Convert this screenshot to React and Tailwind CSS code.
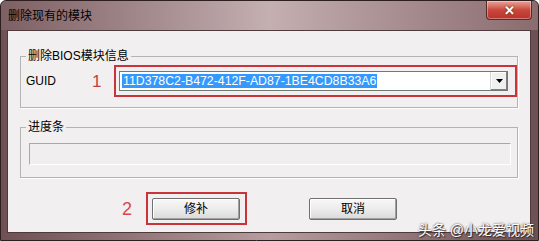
import React from 'react';

const font = { fontFamily: '"Liberation Sans", "Noto Sans CJK SC", sans-serif' };

const WinButton = ({ children }) => (
    <button
        type="button"
        className="w-[88px] h-[22px] text-[12px] text-black rounded-[2px] border border-[#707070] bg-gradient-to-b from-[#f8f8f8] via-[#ececec] to-[#dadada] shadow-[inset_-1px_-1px_0_#a0a0a0,inset_1px_1px_0_#ffffff] flex items-center justify-center"
    >
        {children}
    </button>
);

const App = () => {
    return (
        <div
            style={font}
            className="relative w-[539px] h-[241px] overflow-hidden flex flex-col rounded-t-[6px] border border-[#2e1e20] bg-gradient-to-r from-[#6f5154] via-[#b79d9f] to-[#6e5053]"
        >
            {/* title bar */}
            <div className="h-[29px] flex items-start bg-gradient-to-r from-[#7d6064] via-[#c4afb1] to-[#8a6c6f]">
                <span className="pl-[7px] pt-[7px] text-[12px] leading-[16px] text-black">删除现有的模块</span>
                <div className="ml-auto mr-[6px] w-[46px] h-[19px] rounded-b-[4px] border border-[#5a2a2a] border-t-0 bg-gradient-to-b from-[#e8a49a] via-[#c8473c] to-[#b9332a] flex items-center justify-center shadow-[inset_0_0_0_1px_rgba(255,255,255,0.35)]">
                    <span className="text-white text-[13px] font-bold leading-none [text-shadow:0_0_2px_#5a1a1a]">✕</span>
                </div>
            </div>

            {/* client area */}
            <div className="flex-1 ml-[6px] mr-[7px] mb-[7px] bg-[#f1efef] border border-[#4d3a3c] flex flex-col px-[12px] text-[12px] text-black">
                <fieldset className="mt-[17px] border border-[#b4b4b4] shadow-[1px_1px_0_#ffffff] pb-[10px]">
                    <legend className="ml-[5px] px-[2px] leading-[16px]">删除BIOS模块信息</legend>
                    <div className="mt-[1px] flex items-center pl-[5px]">
                        <span className="w-[66px]">GUID</span>
                        <span className="w-[22px] text-[17px] leading-none text-[#c8403f]">1</span>
                        <div className="flex-1 h-[32px] border-2 border-[#c9333a] pl-[3px] pt-[4px] pr-[7px]">
                            <div className="h-[20px] bg-white border border-[#6f7a72] flex items-center">
                                <span className="ml-[2px] px-[1px] h-[14px] leading-[14px] text-[12.3px] bg-[#3399ff] text-white">
                                    11D378C2-B472-412F-AD87-1BE4CD8B33A6
                                </span>
                                <div className="ml-auto h-full w-[17px] border-l border-[#d4d4d4] bg-[#f0f0f0] shadow-[inset_-1px_-1px_0_#808080,inset_1px_1px_0_#ffffff] flex items-center justify-center">
                                    <svg width="7" height="4" viewBox="0 0 7 4">
                                        <path d="M0 0h7L3.5 4z" fill="#000" />
                                    </svg>
                                </div>
                            </div>
                        </div>
                    </div>
                </fieldset>

                <fieldset className="mt-[11px] border border-[#b4b4b4] shadow-[1px_1px_0_#ffffff] pb-[12px]">
                    <legend className="ml-[5px] px-[2px] leading-[16px]">进度条</legend>
                    <div className="mt-[8px] ml-[8px] mr-[6px] h-[22px] border border-[#a8a8a8] border-r-white border-b-white bg-[#f0eeee]" />
                </fieldset>

                <div className="mt-[14px] flex items-center">
                    <span className="ml-[102px] w-[24px] text-[18px] leading-none text-[#d8474a]">2</span>
                    <div className="w-[101px] h-[33px] border-2 border-[#c9333a] pl-[4px] pt-[4px]">
                        <WinButton>修补</WinButton>
                    </div>
                    <div className="ml-[62px]">
                        <WinButton>取消</WinButton>
                    </div>
                </div>
            </div>

            {/* watermark */}
            <span className="absolute right-[4px] bottom-[2px] text-[14px] leading-[16px] text-white [text-shadow:0_0_2px_#3a2a2a,1px_1px_1px_#3a2a2a]">
                头条 @小龙爱视频
            </span>
        </div>
    );
};

export default App;
